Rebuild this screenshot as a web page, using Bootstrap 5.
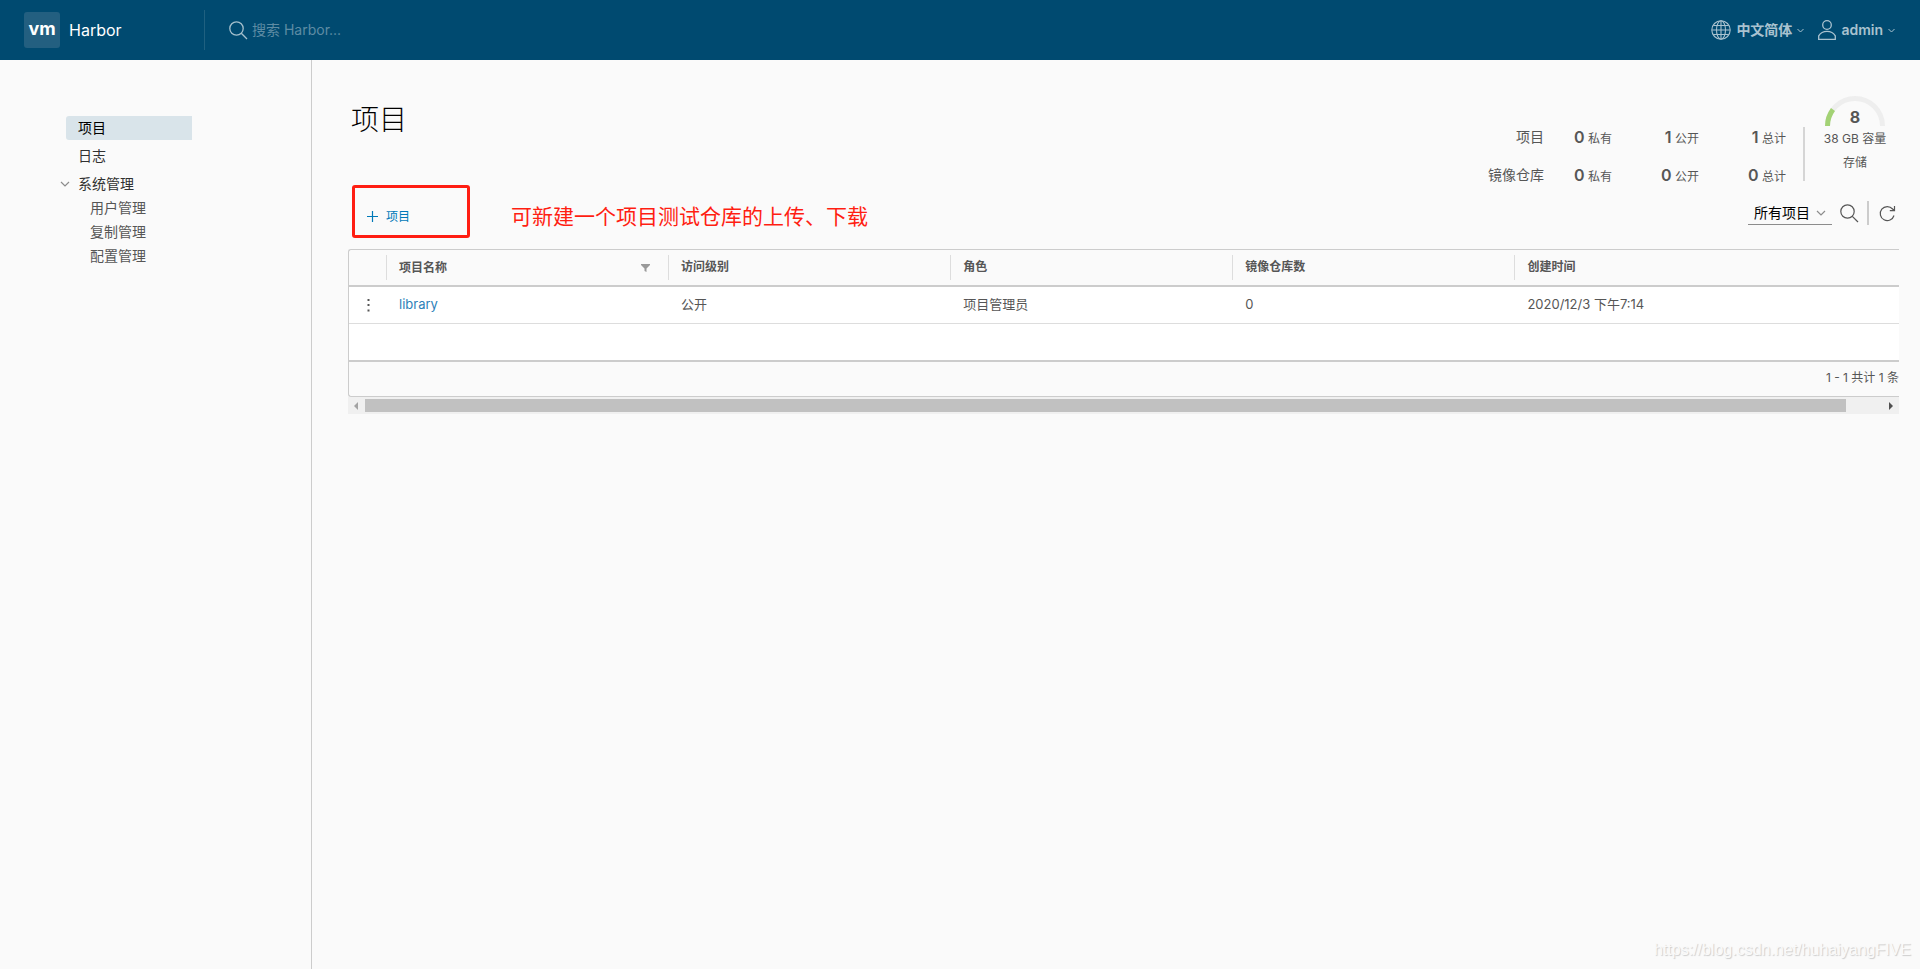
<!DOCTYPE html>
<html lang="zh-CN">
<head>
<meta charset="utf-8">
<meta name="viewport" content="width=device-width, initial-scale=1">
<title>Harbor</title>
<link href="https://cdn.jsdelivr.net/npm/bootstrap@5.3.0/dist/css/bootstrap.min.css" rel="stylesheet">
<style>
body{font-family:Inter,"Noto Sans CJK SC",sans-serif;font-size:13px;line-height:24px;color:#565656;background:#fafafa}
svg{display:block;flex:none;fill:none;stroke:currentColor}
a{text-decoration:none}
.topbar{height:60px;background:#004a70;padding:0 25px 0 24px}
.brand-link{color:#fff;font-size:16px;width:180px;gap:9px}
.brand-mark{width:36px;height:36px;border-radius:3px;background:#235f80;font:700 18px/34px Inter,sans-serif;text-align:center}
.search-box{height:40px;border-left:1px solid #1f6080;padding-left:24px;color:#a5c0cd;gap:4px}
.search-box input{width:200px;border:0;background:none;padding:0;color:#fff;font-size:14px;outline:0}
.search-box input::placeholder{color:#5e8ca4;opacity:1}
.top-menu{gap:14px}
.top-btn{border:0;background:none;padding:0;color:#a9c2cf;font-size:14px;font-weight:600;gap:5px}
.sidenav{width:312px;flex:none;border-right:1px solid #ccc;padding:56px 0 0 60px;font-size:14px}
.sidenav a{display:block;color:#313131;width:126px;margin:0 0 4px 6px;padding-left:12px;border-radius:3px 0 0 3px}
.sidenav a.active{background:#d9e4ea;color:#000}
.sidenav ul a{color:#565656;margin:0 0 0 18px}
.group-btn{border:0;background:none;padding:0;color:#313131;gap:8px}
.group-btn svg{color:#8c8c8c}
.content-area{min-width:0;padding:36px 21px 0 36px}
h1{font-size:28px;line-height:48px;font-weight:200;color:#000;margin:0 0 0 3px}
.stats{gap:17px;margin-right:11px}
.stat-list{display:grid;grid-template-columns:auto 68px 87px 87px;row-gap:12px;text-align:right;font-size:12px;margin-top:29px}
.stat-list b{font-size:16px;font-weight:600}
.stat-list .stat-name{font-size:14px}
.stat-rule{width:2px;height:54px;background:#d5d5d5;margin-top:31px}
.gauge{width:66px;text-align:center;font-size:12px;line-height:24px}
.gauge b{display:block;font-size:16px;line-height:20px;margin-top:-19px}
.toolbar{height:52px;margin:-4px 0 12px}
.new-frame{width:118px;height:53px;border:3px solid #ff1e12;border-radius:3px;margin-left:4px;padding:10px 0 0 12px}
.new-btn{border:0;background:none;padding:0;color:#0079b8;font-size:12px;gap:8px;height:24px}
.hint{color:#ff1e12;font-size:21px;margin:20px 0 0 41px}
.filters{margin:16px 3px 0 0}
.filter-sel{width:84px;height:24px;border-bottom:1px solid #8c8c8c}
.filter-sel select{appearance:none;border:0;background:none;width:100%;height:100%;padding:0 0 0 6px;font-size:14px;line-height:20px;color:#000;outline:0}
.filter-sel svg{position:absolute;right:6px;top:9px;color:#8c8c8c;pointer-events:none}
.tool-btn{border:0;background:none;padding:0;color:#565656}
.tool-rule{width:2px;height:24px;background:#ccc;margin:0 10px 0 8px}
.datagrid{border:1px solid #ccc;border-right:0;border-radius:3px 0 0 3px;overflow:hidden}
.datagrid table{width:100%;table-layout:fixed;border-collapse:separate;border-spacing:0}
.datagrid th{height:37px;padding:0;font-size:12px;font-weight:600;border-bottom:2px solid #ccc;vertical-align:top}
.datagrid th div{height:25px;margin-top:5px;border-left:1px solid #ddd;padding:0 18px 0 12px}
.datagrid th:first-child div{border:0}
.datagrid td{height:37px;padding:0 13px 3px;background:#fff;border-bottom:1px solid #ddd}
.datagrid tbody tr:last-child td{border-bottom:2px solid #ccc;height:38px}
.datagrid tbody a{color:#2d7fb8}
.datagrid .act-cell{padding:0 0 0 18px}
.col-act{width:37px}.col-data{width:18.2%}
.grid-foot{height:34px;line-height:32px;font-size:12px;white-space:nowrap}
.hscroll{height:17px;background:#f0f0f0;gap:4px;padding:0 5px}
.hthumb{height:13px;width:96.1%;background:#c1c1c1;margin-left:1px}
.watermark{position:absolute;right:9px;bottom:7px;font:16px/24px "Liberation Sans",sans-serif;color:#fafafa;text-shadow:1px 1px 1px #ccc}
</style>
<script src="https://cdn.jsdelivr.net/npm/bootstrap@5.3.0/dist/js/bootstrap.bundle.min.js"></script>
</head>
<body class="min-vh-100 d-flex flex-column position-relative">
<header class="topbar d-flex align-items-center">
  <a class="brand-link d-flex align-items-center" href="#"><span class="brand-mark">vm</span>Harbor</a>
  <label class="search-box d-flex align-items-center">
    <svg width="19" height="19" viewBox="0 0 19 19" stroke-width="1.3"><circle cx="7.5" cy="7.5" r="6.7"/><path d="M12.3 12.3 18 18"/></svg>
    <input type="text" placeholder="搜索 Harbor..." aria-label="搜索 Harbor">
  </label>
  <div class="top-menu ms-auto d-flex">
    <button class="top-btn d-flex align-items-center" type="button">
      <svg width="20" height="20" viewBox="0 0 20 20" stroke-width="1.1"><circle cx="10" cy="10" r="9.2"/><ellipse cx="10" cy="10" rx="4.5" ry="9.2"/><path d="M10 1v18M1 10h18M2.5 5.5h15M2.5 14.5h15"/></svg>
      中文简体
      <svg width="7" height="5" viewBox="0 0 7 5"><path d="m.5 1 3 3 3-3"/></svg>
    </button>
    <button class="top-btn d-flex align-items-center" type="button">
      <svg width="18" height="20" viewBox="0 0 18 20" stroke-width="1.3"><circle cx="9" cy="5" r="4.3"/><path d="M.7 19.3v-3.5c1.7-2.8 4.7-4.4 8.3-4.4s6.6 1.6 8.3 4.4v3.5z"/></svg>
      admin
      <svg width="7" height="5" viewBox="0 0 7 5"><path d="m.5 1 3 3 3-3"/></svg>
    </button>
  </div>
</header>
<div class="d-flex flex-grow-1">
  <nav class="sidenav">
    <a class="active" href="#">项目</a>
    <a href="#">日志</a>
    <button class="group-btn d-flex align-items-center" type="button"><svg width="10" height="7" viewBox="0 0 10 7" stroke-width="1.2"><path d="m1 1 4 4 4-4"/></svg>系统管理</button>
    <ul class="list-unstyled mb-0">
      <li><a href="#">用户管理</a></li>
      <li><a href="#">复制管理</a></li>
      <li><a href="#">配置管理</a></li>
    </ul>
  </nav>
  <main class="content-area flex-grow-1">
    <div class="d-flex justify-content-between align-items-start">
      <h1>项目</h1>
      <div class="stats d-flex">
        <div class="stat-list">
          <span class="stat-name">项目</span><span><b>0</b> 私有</span><span><b>1</b> 公开</span><span><b>1</b> 总计</span>
          <span class="stat-name">镜像仓库</span><span><b>0</b> 私有</span><span><b>0</b> 公开</span><span><b>0</b> 总计</span>
        </div>
        <div class="stat-rule"></div>
        <div class="gauge">
          <svg class="mx-auto" width="60" height="30" viewBox="0 0 60 30" stroke-width="5"><path stroke="#eee" d="M2.5 30a27.5 27.5 0 0 1 55 0"/><path stroke="#a3d275" d="M2.5 30A27.5 27.5 0 0 1 8 13.5"/></svg>
          <b>8</b>38 GB 容量<br>存储
        </div>
      </div>
    </div>
    <div class="toolbar d-flex align-items-start">
      <div class="new-frame d-flex align-items-center"><button class="new-btn d-flex align-items-center" type="button"><svg width="11" height="11" viewBox="0 0 11 11" stroke-width="1.2"><path d="M5.5 0v11M0 5.5h11"/></svg>项目</button></div>
      <span class="hint d-block">可新建一个项目测试仓库的上传、下载</span>
      <div class="filters ms-auto d-flex align-items-center">
        <div class="filter-sel position-relative me-2"><select aria-label="项目范围"><option>所有项目</option></select><svg width="10" height="7" viewBox="0 0 10 7" stroke-width="1.2"><path d="m1 1 4 4 4-4"/></svg></div>
        <button class="tool-btn" type="button" aria-label="搜索"><svg width="19" height="19" viewBox="0 0 19 19" stroke-width="1.2"><circle cx="7.5" cy="7.5" r="6.7"/><path d="M12.3 12.3 18 18"/></svg></button>
        <div class="tool-rule"></div>
        <button class="tool-btn" type="button" aria-label="刷新"><svg width="17" height="17" viewBox="0 0 17 17" stroke-width="1.2"><path d="M15 10.5A7 7 0 1 1 13.600 4L15.500 5.500M15.500 1v4.700h-4.700"/></svg></button>
      </div>
    </div>
    <div class="datagrid">
      <table>
        <colgroup><col class="col-act"><col class="col-data"><col class="col-data"><col class="col-data"><col class="col-data"><col></colgroup>
        <thead><tr>
          <th><div></div></th>
          <th><div class="d-flex align-items-center justify-content-between">项目名称<svg width="9" height="8" viewBox="0 0 9 8"><path fill="#9a9a9a" stroke="none" d="M0 0h9v1L5.500 4.500V8L3.500 7V4.500L0 1z"/></svg></div></th>
          <th><div>访问级别</div></th><th><div>角色</div></th><th><div>镜像仓库数</div></th><th><div>创建时间</div></th>
        </tr></thead>
        <tbody>
          <tr><td class="act-cell"><button class="tool-btn d-block" type="button" aria-label="操作"><svg width="3" height="13" viewBox="0 0 3 13"><path fill="#565656" stroke="none" d="M.5 0h2v2h-2zM.5 5h2v2h-2zM.5 10.500h2v2h-2z"/></svg></button></td><td><a href="#">library</a></td><td>公开</td><td>项目管理员</td><td>0</td><td>2020/12/3 下午7:14</td></tr>
          <tr><td colspan="6"></td></tr>
        </tbody>
      </table>
      <div class="grid-foot text-end">1 - 1 共计 1 条</div>
    </div>
    <div class="hscroll d-flex align-items-center">
      <svg width="7" height="8" viewBox="0 0 7 8"><path fill="#a3a3a3" stroke="none" d="M5 0v8L1 4z"/></svg>
      <div class="hthumb"></div>
      <svg class="ms-auto" width="7" height="8" viewBox="0 0 7 8"><path fill="#505050" stroke="none" d="M2 0v8l4-4z"/></svg>
    </div>
  </main>
</div>
<div class="watermark">https://blog.csdn.net/huhaiyangFIVE</div>
</body>
</html>
